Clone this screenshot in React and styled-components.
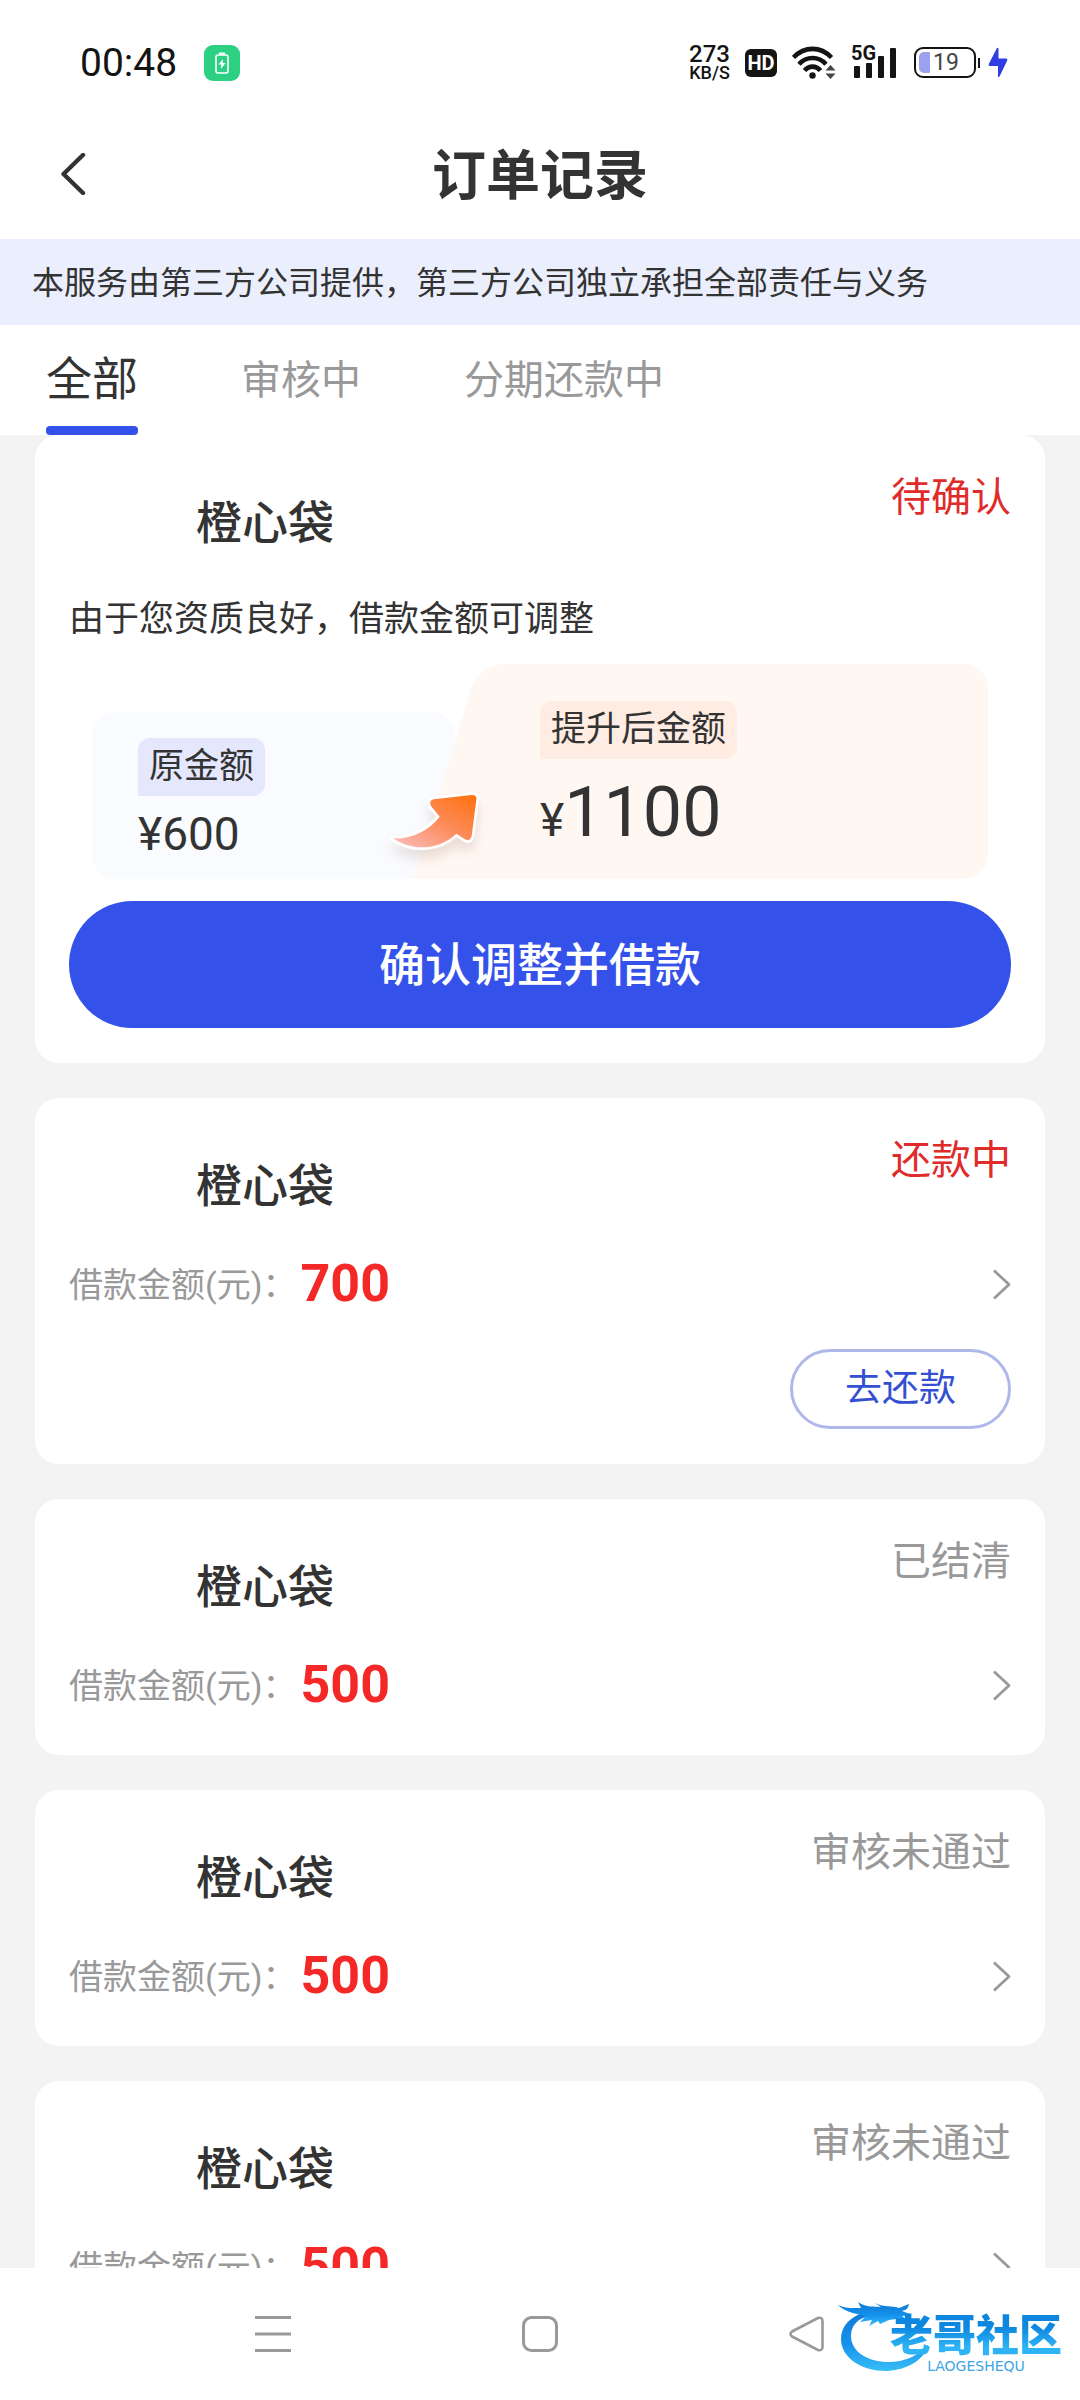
import React, { useState } from "react";
import styled, { createGlobalStyle } from "styled-components";

const GlobalStyle = createGlobalStyle`
  *, *::before, *::after { box-sizing: border-box; }
  body {
    margin: 0;
    background: #ffffff;
    color: #333333;
    font-family: Roboto, "Noto Sans CJK SC", sans-serif;
  }
  button {
    margin: 0;
    padding: 0;
    border: 0;
    background: none;
    color: inherit;
    font: inherit;
    cursor: pointer;
  }
  h1, h2, p { margin: 0; }
  svg { display: block; }
`;

const Screen = styled.div`
  display: flex;
  flex-direction: column;
  height: 100vh;
  overflow: hidden;
`;

/* ---------- status bar ---------- */

const StatusBar = styled.div`
  flex: none;
  display: flex;
  align-items: center;
  justify-content: space-between;
  height: 111px;
  padding: 14px 72px 0 80px;
  color: #141414;
`;

const StatusGroup = styled.div`
  display: flex;
  align-items: center;
  gap: ${(p) => p.$gap}px;
`;

const Clock = styled.span`
  font-size: 39px;
  line-height: 40px;
`;

const ChargeBadge = styled.span`
  display: grid;
  place-items: center;
  width: 36px;
  height: 36px;
  border-radius: 9px;
  background: #2bd082;
`;

const Speed = styled.div`
  display: flex;
  flex-direction: column;
  align-items: center;
  font-weight: 500;
`;

const SpeedValue = styled.span`
  font-size: 24px;
  line-height: 20px;
`;

const SpeedUnit = styled.span`
  font-size: 18px;
  line-height: 18px;
`;

const HdBadge = styled.span`
  width: 32px;
  border-radius: 6px;
  background: #141414;
  color: #ffffff;
  font-size: 20px;
  font-weight: 700;
  line-height: 28px;
  text-align: center;
`;

const Signal = styled.div`
  position: relative;
  width: 48px;
`;

const SignalLabel = styled.span`
  position: absolute;
  left: 0;
  top: -4px;
  font-size: 20px;
  font-weight: 700;
  line-height: 20px;
`;

const Battery = styled.div`
  display: flex;
  align-items: center;
  gap: 2px;

  &::after {
    content: "";
    width: 2px;
    height: 10px;
    background: #141414;
  }
`;

const BatteryBody = styled.div`
  display: flex;
  align-items: center;
  gap: 3px;
  width: 62px;
  height: 31px;
  padding: 0 3px;
  border: 2px solid #141414;
  border-radius: 9px;
  color: #444444;
  font-size: 23px;
  line-height: 23px;
`;

const BatteryLevel = styled.span`
  width: 11px;
  height: 21px;
  border-radius: 5px 1px 1px 5px;
  background: #9aa1ef;
`;

/* ---------- header ---------- */

const Header = styled.header`
  flex: none;
  display: grid;
  grid-template-columns: 100px 1fr 100px;
  align-items: center;
  height: 128px;
  padding: 0 24px;
`;

const BackButton = styled.button`
  display: grid;
  place-items: center;
  height: 100px;
  padding: 0 2px 2px 0;
`;

const PageTitle = styled.h1`
  padding-top: 4px;
  font-size: 54px;
  font-weight: 700;
  line-height: 80px;
  text-align: center;
`;

const Notice = styled.p`
  flex: none;
  padding: 2px 32px 0;
  background: #ebeefc;
  font-size: 32px;
  line-height: 84px;
`;

const Tabs = styled.div`
  flex: none;
  display: flex;
  gap: 103px;
  padding: 0 46px;
`;

const Tab = styled.button`
  display: flex;
  flex-direction: column;
  justify-content: space-between;
  height: 110px;
  padding-top: ${(p) => (p.$active ? 24 : 26)}px;
  color: ${(p) => (p.$active ? "#333333" : "#999999")};
  font-size: ${(p) => (p.$active ? 46 : 40)}px;
  line-height: 60px;

  &::after {
    content: "";
    align-self: stretch;
    height: 9px;
    border-radius: 4px;
    background: ${(p) => (p.$active ? "#3452ea" : "transparent")};
  }
`;

/* ---------- order list ---------- */

const OrderList = styled.main`
  flex: 1;
  min-height: 0;
  display: flex;
  flex-direction: column;
  gap: 35px;
  padding: 0 35px;
  background: #f3f3f3;
  overflow-y: auto;
  scrollbar-width: none;
`;

const Card = styled.article`
  flex: none;
  padding: 35px 34px;
  border-radius: 24px;
  background: #ffffff;
`;

const CardHead = styled.div`
  display: flex;
  align-items: flex-start;
  justify-content: space-between;
  min-height: 104px;
  padding-left: 127px;
`;

const Product = styled.h2`
  font-size: 46px;
  font-weight: 500;
  line-height: 106px;
  height: 104px;
`;

const Status = styled.span`
  color: ${(p) => (p.$active ? "#e02b2b" : "#999999")};
  font-size: 40px;
  line-height: 56px;
`;

const AmountRow = styled.a`
  display: flex;
  align-items: center;
  height: 70px;
  margin-top: 12px;
  color: #999999;
  font-size: 34px;
  text-decoration: none;
`;

const AmountLabel = styled.span`
  padding-bottom: 4px;
`;

const Amount = styled.strong`
  flex: 1;
  padding: 0 0 2px 4px;
  color: #f52828;
  font-size: 52px;
  font-weight: 700;
`;

const CardFoot = styled.div`
  display: flex;
  justify-content: flex-end;
  margin-top: 30px;
`;

const RepayButton = styled.button`
  padding: 0 52px;
  border: 3px solid #b0b8ea;
  border-radius: 40px;
  color: #3350d2;
  font-size: 37px;
  line-height: 74px;
`;

const Hint = styled.p`
  margin-top: 12px;
  padding-top: 2px;
  font-size: 35px;
  line-height: 64px;
`;

const Compare = styled.div`
  display: grid;
  grid-template-columns: 321fr 575fr;
  align-items: end;
  margin: 12px 23px 22px;
`;

const OldAmount = styled.div`
  height: 167px;
  margin-right: -42px;
  padding: 26px 46px 0;
  border-radius: 24px;
  background: #f9fbff;
`;

const NewAmount = styled.div`
  position: relative;
  isolation: isolate;
  height: 215px;
  padding: 37px 0 0 127px;

  &::before,
  &::after {
    content: "";
    position: absolute;
    z-index: -1;
    top: 0;
    bottom: 0;
    background: #fff7f2;
  }
  &::before {
    left: 0;
    width: 60%;
    border-top-left-radius: 24px;
    transform: skewX(-17deg);
    transform-origin: bottom left;
  }
  &::after {
    left: 40%;
    right: 0;
    border-radius: 0 24px 24px 0;
  }
`;

const Tag = styled.span`
  display: inline-block;
  padding: 0 11px;
  border-radius: 12px 12px 12px 0;
  background: ${(p) => p.$tone};
  font-size: 35px;
  line-height: 58px;
  vertical-align: top;
`;

const Price = styled.div`
  margin-top: ${(p) => (p.$large ? 12 : 8)}px;
  font-size: 46px;
  line-height: ${(p) => (p.$large ? 82 : 60)}px;
`;

const BigDigits = styled.span`
  font-size: 70px;
`;

const RiseArrow = styled.svg`
  position: absolute;
  left: -29px;
  bottom: 23px;
  overflow: visible;
`;

const ConfirmButton = styled.button`
  display: block;
  width: 100%;
  height: 127px;
  padding-bottom: 8px;
  border-radius: 64px;
  background: #3452ea;
  color: #ffffff;
  font-size: 46px;
  font-weight: 500;
`;

/* ---------- system navigation ---------- */

const SystemNav = styled.nav`
  position: relative;
  flex: none;
  display: grid;
  grid-template-columns: repeat(3, 1fr);
  height: 132px;
  padding: 0 139px;
  background: #ffffff;
`;

const NavButton = styled.button`
  display: grid;
  place-items: center;
`;

const Watermark = styled.div`
  position: absolute;
  right: 16px;
  top: 30px;
  width: 226px;
  height: 78px;
  pointer-events: none;
`;

const WatermarkText = styled.div`
  position: absolute;
  right: 2px;
  bottom: 3px;
  display: flex;
  flex-direction: column;
  align-items: center;
`;

const WatermarkName = styled.span`
  background: linear-gradient(#0d86e0 30%, #2eb4f4 75%);
  background-clip: text;
  color: transparent;
  font-size: 43px;
  font-weight: 900;
  line-height: 46px;
`;

const WatermarkLatin = styled.span`
  color: #3da5e6;
  font-family: "DejaVu Sans", sans-serif;
  font-size: 14px;
  line-height: 14px;
`;

/* ---------- icons ---------- */

const ChargeIcon = () => (
  <svg width="16" height="24" viewBox="0 0 16 24" fill="none">
    <rect x="2" y="4" width="12" height="18" rx="2" stroke="#fff" strokeWidth="1.6" />
    <path d="M5 1.500h6v2H5z" fill="#fff" />
    <path d="M9 8l-4.500 5.500h2.800L7 18l4.500-6H8.700z" fill="#fff" />
  </svg>
);

const WifiIcon = () => (
  <svg width="44" height="33" viewBox="0 0 44 33" fill="none">
    <g stroke="#141414" strokeWidth="4.600">
      <path d="M1.500 11.500C12.500 0 28.500 0 39.500 11.500" />
      <path d="M7 18.200C14.500 10 26.500 10 34 18.200" />
      <path d="M12.500 24.500C17 19.300 24 19.300 28.500 24.500" />
    </g>
    <circle cx="20.500" cy="29.500" r="3.200" fill="#141414" />
    <path d="M33.500 24.500l5-5.500 5 5.500zM33.500 27.500l5 5.500 5-5.500z" fill="#444" />
  </svg>
);

const SignalIcon = () => (
  <svg width="46" height="31" viewBox="0 0 46 31" fill="#141414">
    <rect x="3" y="19" width="6" height="12" rx="1" />
    <rect x="15" y="16" width="6" height="15" rx="1" />
    <rect x="27" y="9" width="6" height="22" rx="1" />
    <rect x="39" y="1" width="6" height="30" rx="1" />
  </svg>
);

const BoltIcon = () => (
  <svg width="20" height="31" viewBox="0 0 20 31" fill="#2f3de3">
    <path d="M9 1Q10.500 0 10.500 2V11.500H18.500Q20 12 19 14L11.500 29.500Q10 31 10 29V19H1.500Q0 18.500 1 16.500z" />
  </svg>
);

const BackIcon = () => (
  <svg width="26" height="42" viewBox="0 0 26 42" fill="none">
    <path
      d="M23 2L3.500 21L23 40"
      stroke="#333"
      strokeWidth="4.400"
      strokeLinecap="round"
      strokeLinejoin="round"
    />
  </svg>
);

const ChevronIcon = () => (
  <svg width="19" height="31" viewBox="0 0 19 31" fill="none">
    <path d="M2 1.500L17 15.500L2 29.500" stroke="#999" strokeWidth="2.800" strokeLinejoin="round" />
  </svg>
);

const ArrowIcon = () => (
  <RiseArrow width="110" height="70" viewBox="70 140 330 210" aria-hidden="true">
    <defs>
      <linearGradient id="rise" x1="0.950" y1="0.050" x2="0.150" y2="0.950">
        <stop offset="0" stopColor="#ff7414" />
        <stop offset="0.500" stopColor="#fc8a58" />
        <stop offset="1" stopColor="#fbb5ae" />
      </linearGradient>
      <filter id="soft" x="-30%" y="-30%" width="160%" height="180%">
        <feDropShadow dx="0" dy="26" stdDeviation="16" floodColor="#a08070" floodOpacity="0.220" />
      </filter>
    </defs>
    <g filter="url(#soft)">
      <path
        d="M97 297C150 300 203 276 237 232L211 200Q203 183 220 180L333 167Q349 166 347 182L333 290Q328 308 313 300L287 283C235 333 155 337 97 297Z"
        fill="#fff"
        stroke="#fff"
        strokeWidth="16"
        strokeLinejoin="round"
      />
    </g>
    <path
      d="M97 297C150 300 203 276 237 232L211 200Q203 183 220 180L333 167Q349 166 347 182L333 290Q328 308 313 300L287 283C235 333 155 337 97 297Z"
      fill="url(#rise)"
    />
  </RiseArrow>
);

const MenuIcon = () => (
  <svg width="36" height="36" viewBox="0 0 36 36" stroke="#999" strokeWidth="3">
    <path d="M0 1.500H36M0 18H36M0 34.500H36" />
  </svg>
);

const HomeIcon = () => (
  <svg width="36" height="36" viewBox="0 0 36 36" fill="none">
    <rect x="1.500" y="1.500" width="33" height="33" rx="8" stroke="#999" strokeWidth="3" />
  </svg>
);

const TriangleIcon = () => (
  <svg width="36" height="36" viewBox="0 0 36 36" fill="none">
    <path
      d="M3 15.500L29 2Q33.500 1 33.500 5V31Q33.500 35 29 34L3 20.500Q0 18 3 15.500Z"
      stroke="#999"
      strokeWidth="2.600"
      strokeLinejoin="round"
    />
  </svg>
);

const DragonIcon = () => (
  <svg width="92" height="76" viewBox="0 0 92 76" fill="none">
    <defs>
      <linearGradient id="dragon" x1="0" y1="0" x2="0" y2="1">
        <stop offset="0" stopColor="#0f78d4" />
        <stop offset="0.550" stopColor="#1592ec" />
        <stop offset="1" stopColor="#38bdf6" />
      </linearGradient>
    </defs>
    <g fill="url(#dragon)">
      <path d="M30 13C12 18 3 28 3 41C3 60 24 73 48 73C70 72 86 62 90 47C80 58 66 64 51 64C30 64 13 54 13 38C13 28 19 20 34 17Z" />
      <path d="M0 7C8 11 16 10 23 10L20 4C29 10 36 8 43 9L37 5C47 10 54 7 61 10L71 6C70 11 68 12 64 13L74 17L64 18L70 23L58 21L51 22L42 26L40 23L31 28L34 22L22 24L28 18C20 16 8 15 0 7Z" />
    </g>
  </svg>
);

/* ---------- data ---------- */

const TABS = ["全部", "审核中", "分期还款中"];

const ORDERS = [
  { id: 2, product: "橙心袋", status: "还款中", active: true, amount: 700, action: "去还款" },
  { id: 3, product: "橙心袋", status: "已结清", amount: 500 },
  { id: 4, product: "橙心袋", status: "审核未通过", amount: 500 },
  { id: 5, product: "橙心袋", status: "审核未通过", amount: 500 },
];

function OfferCard() {
  return (
    <Card>
      <CardHead>
        <Product>橙心袋</Product>
        <Status $active>待确认</Status>
      </CardHead>
      <Hint>由于您资质良好，借款金额可调整</Hint>
      <Compare>
        <OldAmount>
          <Tag $tone="#e5e8fd">原金额</Tag>
          <Price>¥600</Price>
        </OldAmount>
        <NewAmount>
          <Tag $tone="#ffece3">提升后金额</Tag>
          <Price $large>
            ¥<BigDigits>1100</BigDigits>
          </Price>
          <ArrowIcon />
        </NewAmount>
      </Compare>
      <ConfirmButton type="button">确认调整并借款</ConfirmButton>
    </Card>
  );
}

function OrderCard({ order }) {
  return (
    <Card>
      <CardHead>
        <Product>{order.product}</Product>
        <Status $active={order.active}>{order.status}</Status>
      </CardHead>
      <AmountRow href={`#order-${order.id}`}>
        <AmountLabel>借款金额(元)：</AmountLabel>
        <Amount>{order.amount}</Amount>
        <ChevronIcon />
      </AmountRow>
      {order.action && (
        <CardFoot>
          <RepayButton type="button">{order.action}</RepayButton>
        </CardFoot>
      )}
    </Card>
  );
}

export default function App() {
  const [tab, setTab] = useState(0);

  return (
    <Screen lang="zh-CN">
      <GlobalStyle />
      <StatusBar>
        <StatusGroup $gap={27}>
          <Clock>00:48</Clock>
          <ChargeBadge>
            <ChargeIcon />
          </ChargeBadge>
        </StatusGroup>
        <StatusGroup $gap={15}>
          <Speed>
            <SpeedValue>273</SpeedValue>
            <SpeedUnit>KB/S</SpeedUnit>
          </Speed>
          <HdBadge>HD</HdBadge>
          <WifiIcon />
          <Signal>
            <SignalLabel>5G</SignalLabel>
            <SignalIcon />
          </Signal>
          <StatusGroup $gap={8}>
            <Battery>
              <BatteryBody>
                <BatteryLevel />
                19
              </BatteryBody>
            </Battery>
            <BoltIcon />
          </StatusGroup>
        </StatusGroup>
      </StatusBar>

      <Header>
        <BackButton type="button" aria-label="返回">
          <BackIcon />
        </BackButton>
        <PageTitle>订单记录</PageTitle>
      </Header>
      <Notice>本服务由第三方公司提供，第三方公司独立承担全部责任与义务</Notice>
      <Tabs role="tablist">
        {TABS.map((name, i) => (
          <Tab
            key={name}
            type="button"
            role="tab"
            aria-selected={i === tab}
            $active={i === tab}
            onClick={() => setTab(i)}
          >
            {name}
          </Tab>
        ))}
      </Tabs>

      <OrderList>
        <OfferCard />
        {ORDERS.map((order) => (
          <OrderCard key={order.id} order={order} />
        ))}
      </OrderList>

      <SystemNav>
        <NavButton type="button" aria-label="最近任务">
          <MenuIcon />
        </NavButton>
        <NavButton type="button" aria-label="主屏幕">
          <HomeIcon />
        </NavButton>
        <NavButton type="button" aria-label="后退">
          <TriangleIcon />
        </NavButton>
        <Watermark>
          <DragonIcon />
          <WatermarkText>
            <WatermarkName>老哥社区</WatermarkName>
            <WatermarkLatin>LAOGESHEQU</WatermarkLatin>
          </WatermarkText>
        </Watermark>
      </SystemNav>
    </Screen>
  );
}
